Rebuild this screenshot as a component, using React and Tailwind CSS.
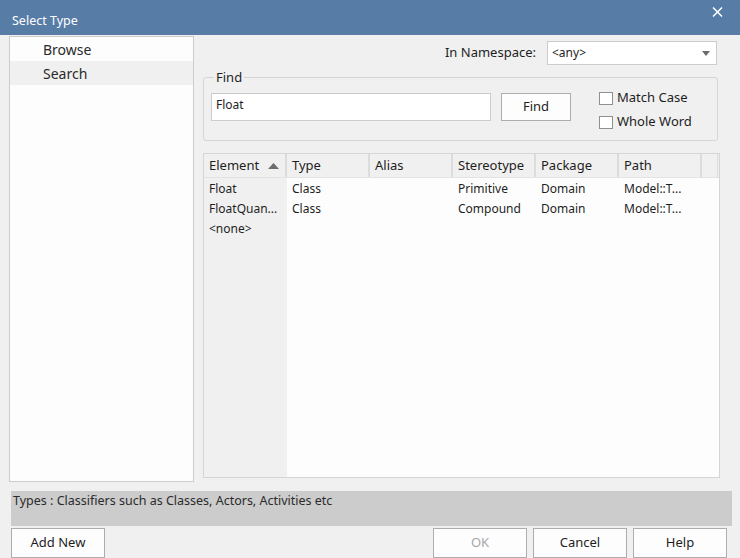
import { useState } from "react";

const columns = ["Element", "Type", "Alias", "Stereotype", "Package", "Path"];

const rows = [
   ["Float", "Class", "", "Primitive", "Domain", "Model::T..."],
   ["FloatQuan...", "Class", "", "Compound", "Domain", "Model::T..."],
   ["<none>", "", "", "", "", ""],
];

const Checkbox = ({ label }) => (
   <label className="flex items-center gap-[4px] h-[14px] text-[13px] text-[#1e1e1e]">
      <span className="w-[14px] h-[13px] border border-[#8f8f8f] bg-white" />
      {label}
   </label>
);

const Button = ({ children, disabled, className = "" }) => (
   <button
      className={`h-[30px] w-[94px] border border-[#adadad] bg-[#fdfdfd] text-[13px] ${disabled ? "text-[#a8a8a8]" : "text-[#1e1e1e]"} ${className}`}
      disabled={disabled}
   >
      {children}
   </button>
);

const App = () => {
   const [query, setQuery] = useState("Float");
   const [mode, setMode] = useState("Search");

   return (
      <div
         className="w-[740px] h-[558px] bg-[#f0f0f0] flex flex-col overflow-hidden"
         style={{ fontFamily: '"Noto Sans", "Open Sans", sans-serif' }}
      >
         {/* title bar */}
         <div className="h-[35px] shrink-0 bg-[#577ca6] flex items-center justify-between pl-[12px] pr-[17px]">
            <span className="text-white text-[12.5px] pt-[8px]">Select Type</span>
            <svg width="11" height="10" viewBox="0 0 11 10" className="mb-[11px]">
               <path d="M1 0.5 L10 9.5 M10 0.5 L1 9.5" stroke="white" strokeWidth="1.5" />
            </svg>
         </div>

         <div className="flex h-[447px] shrink-0">
            {/* left nav */}
            <div className="ml-[9px] mt-[1px] w-[185px] h-[446px] border border-[#cccccc] bg-[#fdfdfd]">
               {["Browse", "Search"].map((item) => (
                  <div
                     key={item}
                     onClick={() => setMode(item)}
                     className={`h-[24px] pl-[33px] flex items-center text-[14px] text-[#2a2a2a] ${mode === item ? "bg-[#f0f0f0]" : ""}`}
                  >
                     {item}
                  </div>
               ))}
            </div>

            {/* right side */}
            <div className="ml-[9px] w-[517px] flex flex-col">
               <div className="mt-[6px] h-[24px] flex items-center justify-end pr-[3px]">
                  <span className="text-[13px] text-[#1e1e1e] mr-[11px]">In Namespace:</span>
                  <div className="w-[170px] h-[24px] border border-[#cccccc] bg-white flex items-center justify-between pl-[4px] pr-[6px]">
                     <span className="text-[12px] text-[#1e1e1e]">&lt;any&gt;</span>
                     <svg width="8" height="5" viewBox="0 0 8 5">
                        <path d="M0 0 H8 L4 5 Z" fill="#6b6b6b" />
                     </svg>
                  </div>
               </div>

               {/* find group */}
               <div className="relative mt-[12px] w-[515px] h-[64px] border border-[#d5d5d5] rounded-[3px] flex items-start pt-[15px] pl-[7px]">
                  <span className="absolute left-[10px] top-[-10px] px-[2px] bg-[#f0f0f0] text-[13px] text-[#1e1e1e]">Find</span>
                  <input
                     value={query}
                     onChange={(e) => setQuery(e.target.value)}
                     className="w-[280px] h-[28px] border border-[#cccccc] bg-white px-[4px] pb-[6px] text-[12px] text-[#1e1e1e] outline-none"
                  />
                  <Button className="ml-[10px] !w-[70px] !h-[28px]">Find</Button>
                  <div className="ml-[28px] mt-[-2px] flex flex-col gap-[10px]">
                     <Checkbox label="Match Case" />
                     <Checkbox label="Whole Word" />
                  </div>
               </div>

               {/* results table */}
               <div className="mt-[12px] w-[517px] h-[325px] border border-[#d5d5d5] bg-[#fdfdfd] flex flex-col">
                  <div className="h-[24px] flex bg-[#f0f0f0] border-b border-[#e3e3e3]">
                     {columns.map((col) => (
                        <div
                           key={col}
                           className="w-[83px] shrink-0 border-r-2 border-[#dcdcdc] pl-[5px] pr-[6px] flex items-center justify-between text-[13px] text-[#1e1e1e]"
                        >
                           {col}
                           {col === "Element" && (
                              <svg width="11" height="6" viewBox="0 0 11 6">
                                 <path d="M0 6 L5.5 0 L11 6 Z" fill="#6d6d6d" />
                              </svg>
                           )}
                        </div>
                     ))}
                     <div className="w-[16px] border-r border-[#dcdcdc]" />
                  </div>
                  <div className="flex flex-1">
                     {columns.map((col, ci) => (
                        <div key={col} className={`w-[83px] shrink-0 pt-[1px] ${ci === 0 ? "bg-[#f0f0f0]" : ""}`}>
                           {rows.map((row, ri) => (
                              <div key={ri} className="h-[20px] pl-[5px] flex items-center text-[12px] text-[#1e1e1e] whitespace-nowrap">
                                 {row[ci]}
                              </div>
                           ))}
                        </div>
                     ))}
                  </div>
               </div>
            </div>
         </div>

         {/* status */}
         <div className="mt-[9px] ml-[11px] w-[721px] h-[35px] shrink-0 bg-[#cccccc] pl-[2px] pt-[1px] text-[12.5px] text-[#2b2b2b]">
            Types : Classifiers such as Classes, Actors, Activities etc
         </div>

         <div className="mt-[2px] flex">
            <Button className="ml-[11px]">Add New</Button>
            <div className="ml-[328px] flex gap-[6px]">
               <Button disabled>OK</Button>
               <Button>Cancel</Button>
               <Button>Help</Button>
            </div>
         </div>
      </div>
   );
};

export default App;
